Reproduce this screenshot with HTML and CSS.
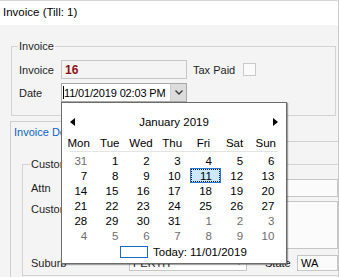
FILE: index.html
```html
<!DOCTYPE html>
<html>
<head>
<meta charset="utf-8">
<link rel="stylesheet" href="styles.css">
</head>
<body>
<div class="window">
  <div class="titlebar">Invoice (Till: 1)</div>
  <fieldset class="group inv">
    <legend>Invoice</legend>
    <div class="row">
      <span class="lbl">Invoice</span>
      <div class="textbox ro"><b class="invno">16</b></div>
      <span class="tax">Tax Paid</span>
      <span class="check"></span>
    </div>
    <div class="row row2">
      <span class="lbl">Date</span>
      <div class="datepick">
        <div class="dp-text"><span class="caret"></span>11/01/2019 02:03 PM</div>
        <div class="dp-btn"><svg width="8" height="5" viewBox="0 0 8 5"><polyline points="0.5,0.5 4,4 7.5,0.5" fill="none" stroke="#3a3a3a" stroke-width="1.4"/></svg></div>
        <div class="cal">
          <div class="cal-head"><span class="arrow left"></span><span class="month">January 2019</span><span class="arrow right"></span></div>
          <div class="dow"><span>Mon</span><span>Tue</span><span>Wed</span><span>Thu</span><span>Fri</span><span>Sat</span><span>Sun</span></div>
          <div class="sep"></div>
          <div class="days">
            <span class="g">31</span><span>1</span><span>2</span><span>3</span><span>4</span><span>5</span><span>6</span>
            <span>7</span><span>8</span><span>9</span><span>10</span><span class="sel">11</span><span>12</span><span>13</span>
            <span>14</span><span>15</span><span>16</span><span>17</span><span>18</span><span>19</span><span>20</span>
            <span>21</span><span>22</span><span>23</span><span>24</span><span>25</span><span>26</span><span>27</span>
            <span>28</span><span>29</span><span>30</span><span>31</span><span class="g">1</span><span class="g">2</span><span class="g">3</span>
            <span class="g">4</span><span class="g">5</span><span class="g">6</span><span class="g">7</span><span class="g">8</span><span class="g">9</span><span class="g">10</span>
          </div>
          <div class="today"><span class="tbox"></span>Today: 11/01/2019</div>
        </div>
      </div>
    </div>
  </fieldset>
  <div class="details">
    <div class="tabs"><div class="tab">Invoice Details</div><div class="tabfill"></div></div>
    <fieldset class="group cust">
      <legend>Customer</legend>
      <div class="row r-attn"><span class="lbl2">Attn</span><div class="textbox wide"></div></div>
      <div class="row r-cust"><span class="lbl2 top">Customer</span><div class="textbox wide tall"></div></div>
      <div class="row r-sub"><span class="lbl2">Suburb</span><div class="combo">PERTH<span class="tri"></span></div><span class="state">State</span><div class="textbox wide wa">WA</div></div>
    </fieldset>
  </div>
</div>
</body>
</html>
```

FILE: styles.css
```css
* { box-sizing: border-box; }
body {
  margin: 0;
  font-family: "Liberation Sans", Arial, sans-serif;
  font-size: 11px;
  color: #1e1e1e;
}
.window {
  width: 339px;
  height: 277px;
  overflow: hidden;
  background: #f4f4f4;
  border-top: 1px solid #d6d6d6;
  border-right: 1px solid #c9c9c9;
}
.titlebar {
  height: 24px;
  line-height: 22px;
  padding-left: 3px;
  background: #fff;
  font-size: 11.5px;
  color: #000;
}
.group {
  border: 1px solid #d3d3d3;
  margin: 0;
  padding: 0;
  min-width: 0;
}
.group legend {
  padding: 0 1px;
  margin-left: -1px;
  line-height: 14px;
  font-size: 11px;
  color: #1e1e1e;
}
.inv {
  margin: 14px 2px 0 11px;
  padding: 7px 0 13px 7px;
}
.row {
  display: flex;
  align-items: center;
  height: 19px;
}
.row2 { margin-top: 4px; }
.lbl { width: 42px; }
.textbox {
  height: 19px;
  border: 1px solid #c6c6c6;
  background: #fbfbfb;
  padding-left: 3px;
  display: flex;
  align-items: center;
}
.ro { width: 126px; background: #f4f4f4; }
.invno { color: #8c1212; font-size: 12px; }
.tax { margin-left: 6px; }
.check {
  width: 13px;
  height: 13px;
  margin-left: 8px;
  border: 1px solid #c9c9c9;
  background: #fafafa;
}
.datepick {
  position: relative;
  width: 126px;
  height: 19px;
  border: 1px solid #a9a9a9;
  background: #fff;
  display: flex;
}
.dp-text {
  flex: 1;
  display: flex;
  align-items: center;
  padding-left: 1px;
  letter-spacing: -0.15px;
  color: #000;
}
.caret {
  width: 1px;
  height: 13px;
  background: #000;
}
.dp-btn {
  width: 16px;
  background: #dcdcdc;
  border-left: 1px solid #cfcfcf;
  display: flex;
  align-items: center;
  justify-content: center;
}
.cal {
  position: absolute;
  top: 18px;
  left: -1px;
  width: 226px;
  height: 162px;
  z-index: 10;
  background: #fff;
  border: 1px solid #6c6c6c;
  box-shadow: 1px 1px 1px rgba(0,0,0,0.35);
  padding-top: 9px;
  color: #000;
}
.cal-head {
  height: 20px;
  display: flex;
  align-items: center;
  justify-content: space-between;
  padding: 0 8px;
}
.month { font-size: 11.5px; }
.arrow {
  width: 0;
  height: 0;
  border-top: 4px solid transparent;
  border-bottom: 4px solid transparent;
}
.arrow.left { border-right: 5px solid #000; }
.arrow.right { border-left: 5px solid #000; }
.dow, .days {
  display: grid;
  grid-template-columns: repeat(7, 31.2px);
  margin-left: 1px;
}
.dow {
  margin-top: 4px;
  height: 15px;
  line-height: 15px;
  text-align: center;
  font-size: 11.5px;
}
.sep {
  height: 1px;
  margin: 0 8px;
  background: #e4e4e4;
}
.days {
  margin-top: 2px;
  grid-auto-rows: 15px;
  line-height: 15px;
  font-size: 11.5px;
}
.days span {
  text-align: right;
  padding-right: 7px;
  position: relative;
  z-index: 0;
}
.days .g { color: #6d6d6d; }
.days .sel::before {
  content: "";
  position: absolute;
  left: 2px;
  right: -2px;
  top: -1px;
  bottom: 1px;
  z-index: -1;
  background: #cce8ff;
  border: 1px solid #2a78d4;
  outline: 1px dotted #1a1a1a;
  outline-offset: -2px;
}
.today {
  height: 15px;
  display: flex;
  align-items: center;
  padding-left: 58px;
  font-size: 11.5px;
}
.tbox {
  width: 28px;
  height: 12px;
  border: 1px solid #1b6ac9;
  margin-right: 5px;
}
.details {
  margin: 5px 0 0 10px;
  border-left: 1px solid #cfcfcf;
  height: 200px;
}
.tabs {
  display: flex;
  height: 21px;
}
.tab {
  border-top: 1px solid #cfcfcf;
  border-right: 1px solid #cfcfcf;
  padding: 0 10px 0 3px;
  line-height: 20px;
  color: #0a64c6;
}
.tabfill {
  flex: 1;
  border-bottom: 1px solid #cfcfcf;
}
.cust {
  margin: 15px 0 0 11px;
  padding: 8px 0 4px 8px;
  border-right: none;
}
.lbl2 { width: 98px; }
.lbl2.top { align-self: flex-start; padding-top: 2px; }
.r-attn { height: 18px; }
.r-attn .textbox { height: 18px; }
.wide { flex: 1; }
.r-cust { margin-top: 4px; height: 48px; align-items: flex-start; }
.tall { height: 48px; }
.r-sub { margin-top: 6px; height: 16px; }
.r-sub .textbox { height: 16px; }
.combo {
  width: 118px;
  height: 16px;
  border: 1px solid #c6c6c6;
  background: #fff;
  padding-left: 3px;
  display: flex;
  align-items: center;
  justify-content: space-between;
  padding-right: 4px;
}
.tri {
  width: 0;
  height: 0;
  border-left: 3.5px solid transparent;
  border-right: 3.5px solid transparent;
  border-top: 4px solid #7a7a7a;
}
.state { margin-left: 18px; width: 32px; }
.wa { color: #000; }
```
